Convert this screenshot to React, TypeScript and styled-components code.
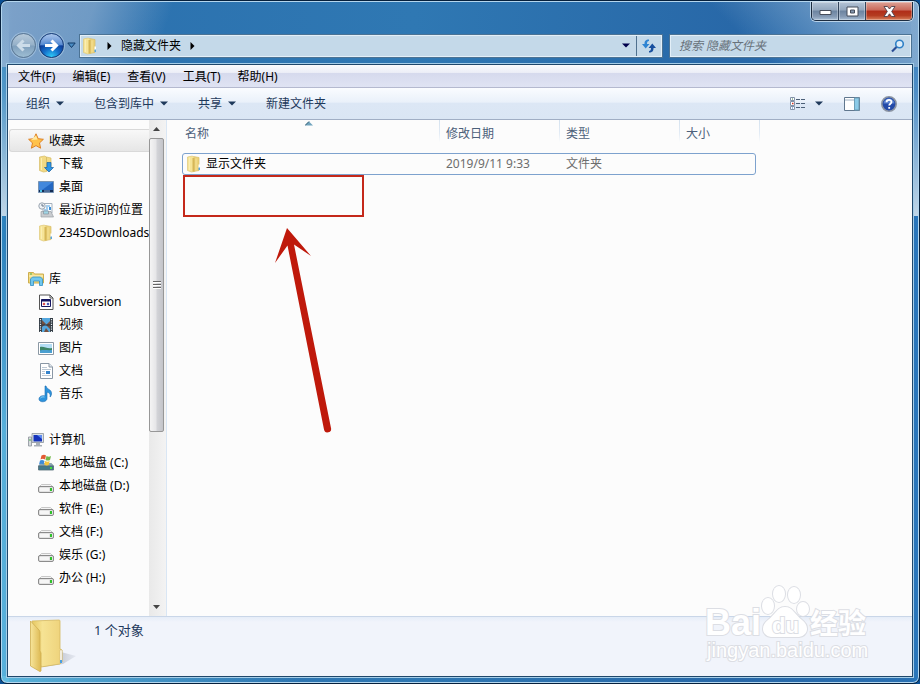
import React from "react";
import styled, { createGlobalStyle, css } from "styled-components";

const GlobalStyle = createGlobalStyle`
  * { box-sizing: border-box; }
  body { margin: 0; background: #0a4f94; }
  body, button, input { font-family: "Noto Sans", "Noto Sans CJK SC", sans-serif; font-size: 12px; line-height: 16px; }
  button { border: 0; padding: 0; margin: 0; background: none; color: inherit; }
  ul { list-style: none; margin: 0; padding: 0; }
  svg { display: block; flex: none; }
`;

const Frame = styled.div`
  min-height: 100vh;
  display: flex;
  flex-direction: column;
  padding: 0 6px 6px;
  border: 1px solid #06203c;
  border-radius: 7px;
  box-shadow: inset 0 0 0 1px #b4d6ee;
  background:
    linear-gradient(rgba(190, 214, 232, 0) 0, rgba(190, 214, 232, 0.25) 90px, rgba(200, 219, 234, 0.95) 100%) 0 0 / 8px 215px no-repeat,
    linear-gradient(rgba(190, 214, 232, 0) 0, rgba(190, 214, 232, 0.25) 90px, rgba(200, 219, 234, 0.95) 100%) 100% 0 / 8px 215px no-repeat,
    linear-gradient(108deg, rgba(146, 174, 208, 0.8) 0, rgba(140, 172, 206, 0.7) 90px, rgba(140, 172, 206, 0) 165px) 0 0 / 50% 66px no-repeat,
    linear-gradient(225deg, rgba(146, 178, 210, 0.85) 0, rgba(146, 178, 210, 0.6) 70px, rgba(140, 172, 206, 0) 150px) 100% 0 / 50% 66px no-repeat,
    linear-gradient(rgba(102, 190, 228, 0) 240px, rgba(102, 190, 228, 0.75) 430px) 0 0 / 8px 100% no-repeat,
    linear-gradient(90deg, rgba(102, 196, 228, 0.8) 0, rgba(80, 170, 220, 0) 300px) 0 100% / 100% 7px no-repeat,
    linear-gradient(90deg, #2f88c2 0, #2b70ae 12px, #2f78b3 45%, #2868a8 80%, #2a70b2 calc(100% - 12px), #2877bd 100%);
`;

const TitleBar = styled.header`
  display: flex;
  justify-content: flex-end;
  align-items: flex-start;
  height: 32px;
`;

const Caption = styled.div`
  display: flex;
  height: 19px;
  margin-top: 1px;
  border: 1px solid #1c2c40;
  border-top: 0;
  border-radius: 0 0 5px 5px;
  box-shadow: 0 0 0 1px rgba(215, 232, 245, 0.75);
  overflow: hidden;
`;

const CaptionButton = styled.button<{ $close?: boolean }>`
  display: flex;
  align-items: center;
  justify-content: center;
  width: ${(p) => (p.$close ? 46 : 27)}px;
  border-right: ${(p) => (p.$close ? 0 : 1)}px solid #33455c;
  box-shadow: inset 0 0 0 1px rgba(255, 255, 255, 0.3);
  background: ${(p) =>
    p.$close
      ? "linear-gradient(#dda296 0, #c9695a 45%, #b02c18 50%, #b43c20 75%, #d8805c 100%)"
      : "linear-gradient(#b4c4d6 0, #92a6bd 45%, #6c84a0 50%, #8499b3 80%, #a9bfd6 100%)"};
`;

const NavBar = styled.nav`
  display: flex;
  align-items: center;
  height: 31px;
  padding: 0 2px 6px 4px;
  gap: 4px;
`;

const Travel = styled.div`
  display: flex;
  align-items: center;
  gap: 3px;
`;

const RoundButton = styled.button<{ $active?: boolean }>`
  display: flex;
  align-items: center;
  justify-content: center;
  width: 25px;
  height: 25px;
  border: 1px solid ${(p) => (p.$active ? "#173c78" : "#5c7894")};
  border-radius: 50%;
  box-shadow: 0 0 0 1px rgba(190, 216, 238, 0.5);
  background: ${(p) =>
    p.$active
      ? "radial-gradient(circle at 50% 100%, #2fd0fa 0, #1672cc 32%, rgba(10, 60, 150, 0) 62%), linear-gradient(#a9c5ec 0, #5a8cd2 46%, #0c3794 52%, #0b3c9a 100%)"
      : "linear-gradient(#b7cadb 0, #95b0c8 48%, #7f9fbc 52%, #9dbdd3 100%)"};
`;

const fieldLook = css`
  display: flex;
  align-items: center;
  height: 22px;
  border: 1px solid #e3eff8;
  outline: 1px solid #4c7394;
  background: #c4d9e9;
`;

const AddressBar = styled.div`
  ${fieldLook}
  flex: 1;
  min-width: 0;
  padding-left: 1px;
`;

const Crumb = styled.button`
  padding: 0 9px;
  color: #000;
  white-space: nowrap;
`;

const DropButton = styled.button`
  display: flex;
  align-items: center;
  justify-content: center;
  width: 20px;
  height: 20px;
  margin-left: auto;
`;

const RefreshButton = styled.button`
  display: flex;
  align-items: center;
  justify-content: center;
  width: 25px;
  height: 20px;
  border-left: 1px solid #4f718f;
`;

const SearchBox = styled.label`
  ${fieldLook}
  width: 241px;
  margin-left: 4px;
  padding: 0 5px 0 8px;
`;

const SearchInput = styled.input`
  flex: 1;
  min-width: 0;
  border: 0;
  padding: 0;
  outline: 0;
  background: transparent;
  &::placeholder { color: #68727b; font-style: italic; opacity: 1; }
`;

const Client = styled.div`
  flex: 1;
  display: flex;
  flex-direction: column;
  border: 1px solid #1f476b;
  outline: 1px solid #a5cde8;
  background: #fcfcfc;
`;

const MenuBar = styled.div`
  display: flex;
  align-items: center;
  gap: 17px;
  height: 23px;
  padding: 1px 10px 0;
  border-bottom: 1px solid #b4b9cf;
  background: linear-gradient(#fafbfd 0, #eceef7 34%, #d6daed 38%, #dfe3f3 100%);
`;

const MenuItem = styled.button`
  white-space: nowrap;
  color: #000;
`;

const ToolBar = styled.div`
  display: flex;
  align-items: center;
  gap: 30px;
  height: 32px;
  padding: 0 15px 0 18px;
  border-bottom: 1px solid #a0aec4;
  background: linear-gradient(#fafcff 0, #eaf1fa 45%, #dce7f5 50%, #dae6f4 100%);
  color: #1e395b;
`;

const ToolButton = styled.button<{ $gap?: number }>`
  display: flex;
  align-items: center;
  gap: ${(p) => p.$gap ?? 6}px;
  white-space: nowrap;
`;

const ToolIcons = styled.div`
  display: flex;
  align-items: center;
  gap: 21px;
  margin-left: auto;
`;

const Body = styled.div`
  flex: 1;
  display: flex;
`;

const Sidebar = styled.aside`
  width: 141px;
  padding-top: 9px;
  overflow: hidden;
`;

const Group = styled.ul`
  margin-bottom: 23px;
`;

const TreeRow = styled.li<{ $root?: boolean; $selected?: boolean }>`
  display: flex;
  align-items: center;
  gap: 5px;
  height: 23px;
  padding-left: ${(p) => (p.$root ? 20 : 30)}px;
  white-space: nowrap;
  ${(p) =>
    p.$selected &&
    css`
      margin-left: 1px;
      padding-left: 18px;
      border: 1px solid #d9d9d9;
      border-right: 0;
      border-radius: 3px 0 0 3px;
      background: linear-gradient(#f8f8f8, #e6e6e6);
    `}
`;

const ScrollBar = styled.div`
  display: flex;
  flex-direction: column;
  align-items: stretch;
  width: 17px;
  background: linear-gradient(90deg, #e9e9e9, #f3f3f3);
`;

const ScrollArrow = styled.button`
  display: flex;
  align-items: center;
  justify-content: center;
  height: 18px;
  padding-right: 2px;
`;

const ScrollTrack = styled.div`
  flex: 1;
`;

const Thumb = styled.div`
  display: flex;
  align-items: center;
  justify-content: center;
  height: 64%;
  margin-right: 2px;
  border: 1px solid #979797;
  border-radius: 2px;
  background: linear-gradient(90deg, #f4f4f4 0, #e6e6e8 45%, #d2d3d7 55%, #c3c4c9 100%);
`;

const Main = styled.main`
  position: relative;
  flex: 1;
  min-width: 0;
  border-left: 1px solid #d9e6f4;
  padding-left: 15px;
`;

const Files = styled.table`
  width: 578px;
  table-layout: fixed;
  border-collapse: collapse;
`;

const HeadCell = styled.th<{ $width: number; $first?: boolean }>`
  position: relative;
  width: ${(p) => p.$width}px;
  height: 33px;
  padding: ${(p) => (p.$first ? "0 0 6px 3px" : "0 0 6px 6px")};
  text-align: left;
  font-weight: 400;
  color: #4c607a;
  background: linear-gradient(#d5e2ef, #e2ebf5 60%, #fcfcfc) 100% 0 / 1px 22px no-repeat;
`;

const SortMark = styled.svg`
  position: absolute;
  top: 1px;
  left: 50%;
  margin-left: -6px;
`;

const FileRow = styled.tr`
  position: relative;
  &::after {
    content: "";
    position: absolute;
    inset: 0 4px 0 0;
    border: 1px solid #7da2ce;
    border-radius: 3px;
    pointer-events: none;
  }
`;

const Cell = styled.td`
  height: 22px;
  padding: 0 0 0 6px;
  color: #6d6d6d;
  white-space: nowrap;
`;

const NameCell = styled(Cell)`
  padding-left: 4px;
  color: #000;
`;

const FileName = styled.span`
  display: flex;
  align-items: center;
  gap: 4px;
`;

const Highlight = styled.div`
  position: absolute;
  top: 55px;
  left: 16px;
  width: 181px;
  height: 42px;
  border: 2px solid #c4281a;
`;

const Pointer = styled.svg`
  position: absolute;
  top: 107px;
  left: 106px;
`;

const Details = styled.footer`
  position: relative;
  display: flex;
  height: 60px;
  padding: 1px 0 0 20px;
  gap: 16px;
  border-top: 1px solid #c9d6e8;
  background: linear-gradient(#e6edf8 0, #f1f4fb 5px);
  color: #1e395b;
`;

const Count = styled.span`
  padding-top: 4px;
  font-size: 13px;
`;

const Watermark = styled.svg`
  position: absolute;
  right: 36px;
  bottom: 12px;
  fill: #fff;
  stroke: #dcdee4;
  stroke-width: 2px;
  paint-order: stroke;
  font-family: "Liberation Sans", "Noto Sans CJK SC", sans-serif;
`;

const WatermarkText = styled.text<{ $size: number; $bold?: boolean }>`
  font-size: ${(p) => p.$size}px;
  font-weight: ${(p) => (p.$bold ? 700 : 400)};
`;

const Folder = () => (
  <svg width="16" height="18" viewBox="0 0 16 18">
    <path d="M7.500 1.500 13 2.500v13l-5.500 1z" fill="#ecd27a" stroke="#d8bd66" strokeWidth=".7" />
    <path d="M1.500 2 6.500 1l1.500 1.500v14L5.500 17l-4-1.500z" fill="#f6e498" stroke="#dfc878" strokeWidth=".7" />
    <path d="M6.500 3v13.500h2V3z" fill="#d6b757" />
    <path d="M3.500 2.500v12.500" stroke="#fbeeb2" />
    <path d="M10 3.500v12" stroke="#f5e194" />
    <path d="M12.500 9.500H14V13h-1.500z" fill="#fff" />
    <path d="M12.500 12.500H14V15h-1.500z" fill="#5aa6e0" />
  </svg>
);

const LargeFolder = () => (
  <svg width="50" height="56" viewBox="0 0 50 56">
    <defs>
      <linearGradient id="folderBack" x1="0" x2="1">
        <stop offset="0" stopColor="#e6c862" />
        <stop offset=".35" stopColor="#f6e394" />
        <stop offset="1" stopColor="#eed27a" />
      </linearGradient>
      <linearGradient id="folderFront" x1="0" x2="1">
        <stop offset="0" stopColor="#f7e59a" />
        <stop offset="1" stopColor="#ddb953" />
      </linearGradient>
      <linearGradient id="folderShade" x1="0" x2="1">
        <stop offset="0" stopColor="#8d93a1" />
        <stop offset="1" stopColor="#d8dce6" stopOpacity=".5" />
      </linearGradient>
    </defs>
    <path d="M33 34 48 38 35 46 14 49z" fill="url(#folderShade)" />
    <path d="M4 3 31 2Q32 2 32 3V31l2 1v12l-2 2-19 3z" fill="url(#folderBack)" stroke="#d6b960" strokeWidth=".8" />
    <path d="M2.500 3 11 12q1 1 1 3v18l1 2v18q-1 1-2 0l-8.500-5z" fill="url(#folderFront)" stroke="#cfae50" strokeWidth=".8" />
    <path d="M32 32h2v12l-2 1z" fill="#fff" stroke="#c9b070" strokeWidth=".5" />
    <path d="M32 42h2v3h-2z" fill="#4c9fe0" />
  </svg>
);

const Star = () => (
  <svg width="16" height="16" viewBox="0 0 16 16">
    <path d="m8 .8 2.200 4.900 5.200.6-3.900 3.600 1.100 5.300L8 12.600l-4.600 2.600 1.100-5.300L.6 6.300l5.200-.6z" fill="#ffc24a" stroke="#df8124" />
    <path d="m8 2.500 1.500 4-6.500.4z" fill="#ffe9a0" />
  </svg>
);

const Download = () => (
  <svg width="16" height="18" viewBox="0 0 16 18">
    <path d="M1.500 2 6.500 1l2 1v14.500L5.500 17l-4-1.500zM8.500 2l4.500 1v12l-4.500 1z" fill="#f2da84" stroke="#d6bb66" strokeWidth=".7" />
    <path d="M3.500 3v12" stroke="#fbeeb2" />
    <path d="M9 7.500h4v5h2.500L11 17l-4.500-4.500H9z" fill="#2f96e4" stroke="#1762a8" strokeWidth=".7" />
  </svg>
);

const Desktop = () => (
  <svg width="16" height="16" viewBox="0 0 16 16">
    <path d="M.5 2.500h15v11H.5z" fill="#2367c2" stroke="#7793b2" />
    <path d="M1 3h14L4 11H1z" fill="#4388dc" />
    <path d="M1 11h14v2H1z" fill="#142c54" />
    <path d="M2 11h2v2H2z" fill="#49c3e8" />
    <path d="M6 12h6" stroke="#85aee0" />
  </svg>
);

const Recent = () => (
  <svg width="16" height="16" viewBox="0 0 16 16">
    <path d="M5 1.500h9V11H5z" fill="#fbfdff" stroke="#a5b0bc" />
    <path d="M8 4h4M8 6h2M6 8h4" stroke="#4f9fdf" />
    <path d="M11 5h2v3h-2z" fill="#3d8fd5" />
    <path d="M3 9.500h10l2.500 5.500H3z" fill="#c9ccd0" stroke="#9a9fa5" strokeWidth=".7" />
    <path d="M5.500 9h5v3h-5z" fill="#9fd6e6" stroke="#8a949c" strokeWidth=".7" />
    <circle cx="4" cy="4" r="3.200" fill="#eef3f7" stroke="#9aa4af" />
    <path d="M4 2v2h2" stroke="#647588" fill="none" />
  </svg>
);

const Library = () => (
  <svg width="16" height="16" viewBox="0 0 16 16">
    <path d="M.5 1.500h5l1 1.500h9v9H.5z" fill="#f1da7f" stroke="#cdae4f" />
    <path d="M1 5h14" stroke="#fff5c4" />
    <path d="M2.500 14.500V8l2-2h8l2 2v6.500h-3V10h-6v4.500z" fill="#70c7ee" stroke="#318fc4" strokeWidth=".8" />
    <path d="M2 3h2" stroke="#4cb050" />
  </svg>
);

const Subversion = () => (
  <svg width="16" height="16" viewBox="0 0 16 16">
    <path d="M1.500 1h10.500l3 3v11.500H1.500z" fill="#fff" stroke="#555" />
    <path d="M12 1v3h3" fill="none" stroke="#555" />
    <path d="M3.500 5.500h9v7h-9z" fill="#fff" stroke="#141460" />
    <path d="M3.500 6.500h9" stroke="#141460" strokeWidth="2" />
    <path d="m4.500 10 1.500-1.500L7.500 10 6 11.500z" fill="#d53838" />
    <path d="m8.500 10 1.500-1.500 1.500 1.500-1.500 1.500z" fill="#3040b0" />
  </svg>
);

const Video = () => (
  <svg width="16" height="16" viewBox="0 0 16 16">
    <path d="M1 1h14v14H1z" fill="#333c44" />
    <path d="M4 1h8v14H4z" fill="#54a7de" />
    <path d="M4 3l4 4-4 3zM12 4 8 8l4 4zM6 15l2-4 3 4z" fill="#74503f" />
    <path d="M4 8h8" stroke="#26333c" />
    <path d="M2.500 2v13M13.500 2v13" stroke="#e7eef2" strokeWidth="1.200" strokeDasharray="1.200 1.200" />
  </svg>
);

const Picture = () => (
  <svg width="16" height="16" viewBox="0 0 16 16">
    <path d="M.5 2.500h15v12H.5z" fill="#fff" stroke="#8b98a4" />
    <path d="M2 4h12v9H2z" fill="#b4def5" />
    <path d="M2 7c4-1 7 2 12 1v3H2z" fill="#3c8567" />
    <path d="M2 10.500c4-1 8 0 12-.5v3H2z" fill="#4a9fd0" />
  </svg>
);

const Document = () => (
  <svg width="16" height="16" viewBox="0 0 16 16">
    <path d="M2.500.5H11L14.500 4v11.500h-12z" fill="#fff" stroke="#8a97a5" />
    <path d="M11 .5V4h3.500" fill="#e0e8ef" stroke="#8a97a5" />
    <path d="M4 4.500h5M4 6.500h9M4 8.500h3M4 10.500h3M4 12.500h9" stroke="#bcc8d4" />
    <path d="M8 8h4v3H8z" fill="#3583cc" />
  </svg>
);

const Music = () => (
  <svg width="16" height="18" viewBox="0 0 16 18">
    <path d="M8 1c1 4 6 3 5.500 8-.2 1.500-1 3-1.500 3 .8-3-.5-4-3-5v6.500C9 17.500 1 18 1 14c0-3 4-4 6-3V1z" fill="#2c93dc" stroke="#1a6cb2" strokeWidth=".6" />
    <path d="M2.500 13c1-1.200 2.500-1.300 4-1" stroke="#9bdbfa" fill="none" />
  </svg>
);

const Computer = () => (
  <svg width="16" height="16" viewBox="0 0 16 16">
    <path d="M.5 5h3v9h-3z" fill="#d7dbde" stroke="#8a9299" strokeWidth=".8" />
    <path d="M1 8h2" stroke="#49af4f" />
    <path d="M4 1.500h11.500v9H4z" fill="#dce1e6" stroke="#8b949d" strokeWidth=".8" />
    <path d="M5.500 3H14v6.500H5.500z" fill="#1533bb" />
    <path d="M9 3h5v4z" fill="#5f8cf0" />
    <path d="M8 11h4v2h2v1.500H6V13h2z" fill="#a9b0b7" />
  </svg>
);

const SystemDrive = () => (
  <svg width="16" height="18" viewBox="0 0 16 18">
    <path d="M3 9.500h10.500l2 2.500H.5z" fill="#8aa9b8" stroke="#7d929c" strokeWidth=".7" />
    <path d="M.5 12h15v4h-15z" fill="#42798a" stroke="#546c76" strokeWidth=".8" />
    <path d="M12 13h2v2h-2z" fill="#45e03c" />
    <path d="M3.500 1.500c2-1 3-1 4.500 0L7 5.500C5.500 4.500 4 4.500 2.500 5.500z" fill="#e25a32" />
    <path d="M8.500 2c2 1 3 1 4.500 0L12 6C10.500 7 9 6.500 7.500 6z" fill="#72b84a" />
    <path d="M2 6.500C4 5.500 5 6 6.500 7l-1 3.500C4 9.500 3 9.500 1 10.500z" fill="#3c8ad8" />
    <path d="M7.200 7c1.500 1 3 1 4.500 0l-1 4c-1.500.8-3 .5-4.500-.5z" fill="#f5c53d" />
  </svg>
);

const Drive = () => (
  <svg width="16" height="16" viewBox="0 0 16 16">
    <path d="M3.500 6.500h9l3 3H.5z" fill="#f4f4f4" stroke="#bbb" strokeWidth=".8" />
    <rect x=".5" y="8.500" width="15" height="6" rx="1.500" fill="#e2e2e2" stroke="#808080" strokeWidth=".9" />
    <path d="M2 10h9v3H2z" fill="#f6f6f6" />
    <path d="M12 10h2v3h-2z" fill="#30c22b" />
  </svg>
);

const Triangle = ({ color = "#1e395b" }: { color?: string }) => (
  <svg width="8" height="5" viewBox="0 0 8 5">
    <path d="M0 .5h8L4 4.500z" fill={color} />
  </svg>
);

const CrumbArrow = () => (
  <svg width="5" height="8" viewBox="0 0 5 8">
    <path d="M.5 0v8L4.500 4z" fill="#000" />
  </svg>
);

const TravelArrow = ({ back }: { back?: boolean }) => (
  <svg width="17" height="15" viewBox="0 0 17 15">
    <path
      d={back ? "M15 7.500H4M8.500 2.500l-5 5 5 5" : "M2 7.500h11M8.500 2.500l5 5-5 5"}
      fill="none"
      stroke={back ? "#ccdce9" : "#fff"}
      strokeWidth="3"
    />
  </svg>
);

type Entry = [string, React.ReactNode];

const groups: { root: Entry; items: Entry[]; selected?: boolean }[] = [
  {
    root: ["收藏夹", <Star />],
    selected: true,
    items: [
      ["下载", <Download />],
      ["桌面", <Desktop />],
      ["最近访问的位置", <Recent />],
      ["2345Downloads", <Folder />],
    ],
  },
  {
    root: ["库", <Library />],
    items: [
      ["Subversion", <Subversion />],
      ["视频", <Video />],
      ["图片", <Picture />],
      ["文档", <Document />],
      ["音乐", <Music />],
    ],
  },
  {
    root: ["计算机", <Computer />],
    items: [
      ["本地磁盘 (C:)", <SystemDrive />],
      ["本地磁盘 (D:)", <Drive />],
      ["软件 (E:)", <Drive />],
      ["文档 (F:)", <Drive />],
      ["娱乐 (G:)", <Drive />],
      ["办公 (H:)", <Drive />],
    ],
  },
];

const menus = ["文件(F)", "编辑(E)", "查看(V)", "工具(T)", "帮助(H)"];

export default function App() {
  return (
    <>
      <GlobalStyle />
      <Frame>
        <TitleBar>
          <Caption>
            <CaptionButton aria-label="最小化">
              <svg width="13" height="8" viewBox="0 0 13 8">
                <path d="M1 3.500h11v4H1z" fill="#fff" stroke="#454c5a" />
              </svg>
            </CaptionButton>
            <CaptionButton aria-label="最大化">
              <svg width="13" height="11" viewBox="0 0 13 11">
                <path d="M1 1h11v9H1z" fill="#fff" stroke="#454c5a" />
                <path d="M4.500 4h4v3h-4z" fill="#8295ad" stroke="#454c5a" />
              </svg>
            </CaptionButton>
            <CaptionButton $close aria-label="关闭">
              <svg width="13" height="11" viewBox="0 0 13 11">
                <path d="M1 .5h3.500l2 2.500 2-2.500H12L8.700 5.500l3.300 5H8.500l-2-2.700-2 2.700H1l3.300-5z" fill="#fff" stroke="#4d3f4a" strokeWidth=".9" />
              </svg>
            </CaptionButton>
          </Caption>
        </TitleBar>

        <NavBar aria-label="导航">
          <Travel>
            <RoundButton aria-label="后退"><TravelArrow back /></RoundButton>
            <RoundButton $active aria-label="前进"><TravelArrow /></RoundButton>
            <button aria-label="最近浏览">
              <svg width="9" height="7" viewBox="0 0 9 7">
                <path d="M.8 1h7.400L4.500 5.500z" fill="#4b8dc4" stroke="#123a66" />
              </svg>
            </button>
          </Travel>
          <AddressBar>
            <Folder />
            <Crumb aria-label="展开"><CrumbArrow /></Crumb>
            <button>隐藏文件夹</button>
            <Crumb aria-label="子文件夹"><CrumbArrow /></Crumb>
            <DropButton aria-label="历史地址"><Triangle color="#00004c" /></DropButton>
            <RefreshButton aria-label="刷新">
              <svg width="16" height="16" viewBox="0 0 16 16">
                <path d="M8 1.500C4.500 1.500 3.500 3 3.500 6H1l3.700 4.500L8.500 6H6c0-2 .5-3 2-3z" fill="#2f84d2" />
                <path d="M8 14.500c3.500 0 4.500-1.500 4.500-4.500H15l-3.700-4.500L7.500 10H10c0 2-.5 3-2 3z" fill="#184f9e" />
              </svg>
            </RefreshButton>
          </AddressBar>
          <SearchBox>
            <SearchInput aria-label="搜索" placeholder="搜索 隐藏文件夹" />
            <svg width="14" height="14" viewBox="0 0 14 14">
              <circle cx="8.500" cy="5" r="3.800" fill="#dcecf8" stroke="#2e80c6" strokeWidth="1.600" />
              <path d="M5.500 8 1 12.500" stroke="#2a4d94" strokeWidth="2.200" />
            </svg>
          </SearchBox>
        </NavBar>

        <Client>
          <MenuBar>
            {menus.map((m) => <MenuItem key={m}>{m}</MenuItem>)}
          </MenuBar>
          <ToolBar>
            <ToolButton>组织 <Triangle /></ToolButton>
            <ToolButton>包含到库中 <Triangle /></ToolButton>
            <ToolButton>共享 <Triangle /></ToolButton>
            <ToolButton>新建文件夹</ToolButton>
            <ToolIcons>
              <ToolButton $gap={9} aria-label="更改视图">
                <svg width="16" height="13" viewBox="0 0 16 13">
                  <path d="M.5.500h4v3h-4zM.5 4.500h4v4h-4zM.5 9.500h4v3h-4z" fill="#fff" stroke="#8292a8" />
                  <path d="M2 2h1" stroke="#3c7f4c" />
                  <path d="M2 6.500h1.500" stroke="#d53420" strokeWidth="1.500" />
                  <path d="M2 11h1" stroke="#2f6cc4" />
                  <path d="M6 2.500h10M6 6.500h10M6 10.500h10" stroke="#4c6078" strokeDasharray="4 1" />
                </svg>
                <Triangle />
              </ToolButton>
              <ToolButton aria-label="预览窗格">
                <svg width="16" height="14" viewBox="0 0 16 14">
                  <path d="M.5.500h15v13H.5z" fill="#fff" stroke="#60778e" />
                  <path d="M1 3h14" stroke="#9eb0c2" />
                  <path d="M10.500 1H15v12h-4.500z" fill="#8ccbe8" stroke="#6d9fb8" />
                </svg>
              </ToolButton>
              <ToolButton aria-label="帮助">
                <svg width="16" height="16" viewBox="0 0 16 16">
                  <circle cx="8" cy="8" r="7.200" fill="#234aa8" stroke="#8c95a3" strokeWidth="1.600" />
                  <path d="M2.500 7.500a5.500 5 0 0 1 11 0z" fill="#5a82d0" />
                  <path d="M5.500 6.300C5.600 3.200 10.600 3.300 10.500 6c0 1.700-2.300 1.800-2.300 3.600M8.200 11v1.800" fill="none" stroke="#fff" strokeWidth="1.800" />
                </svg>
              </ToolButton>
            </ToolIcons>
          </ToolBar>

          <Body>
            <Sidebar>
              {groups.map((g) => (
                <Group key={g.root[0]}>
                  <TreeRow $root $selected={g.selected}>{g.root[1]}{g.root[0]}</TreeRow>
                  {g.items.map(([name, icon]) => (
                    <TreeRow key={name}>{icon}{name}</TreeRow>
                  ))}
                </Group>
              ))}
            </Sidebar>
            <ScrollBar>
              <ScrollArrow aria-label="向上滚动">
                <svg width="7" height="4" viewBox="0 0 7 4"><path d="M0 4 3.500 0 7 4z" fill="#444" /></svg>
              </ScrollArrow>
              <ScrollTrack>
                <Thumb>
                  <svg width="8" height="9" viewBox="0 0 8 9">
                    <path d="M0 .5h8M0 3.500h8M0 6.500h8" stroke="#666" />
                    <path d="M0 1.500h8M0 4.500h8M0 7.500h8" stroke="#fff" />
                  </svg>
                </Thumb>
              </ScrollTrack>
              <ScrollArrow aria-label="向下滚动">
                <svg width="7" height="4" viewBox="0 0 7 4"><path d="M0 0h7L3.500 4z" fill="#444" /></svg>
              </ScrollArrow>
            </ScrollBar>
            <Main>
              <Files>
                <thead>
                  <tr>
                    <HeadCell $width={258} $first>
                      名称
                      <SortMark width="8" height="5" viewBox="0 0 8 5">
                        <path d="M0 4.500 4 .5l4 4z" fill="#6fa3bd" />
                        <path d="M0 4.500 4 .5" stroke="#28566e" />
                      </SortMark>
                    </HeadCell>
                    <HeadCell $width={120}>修改日期</HeadCell>
                    <HeadCell $width={120}>类型</HeadCell>
                    <HeadCell $width={80}>大小</HeadCell>
                  </tr>
                </thead>
                <tbody>
                  <FileRow>
                    <NameCell><FileName><Folder />显示文件夹</FileName></NameCell>
                    <Cell>2019/9/11 9:33</Cell>
                    <Cell>文件夹</Cell>
                    <Cell />
                  </FileRow>
                </tbody>
              </Files>
              <Highlight />
              <Pointer width="62" height="208" viewBox="0 0 62 208">
                <path d="M14 1 38 29 21 17.500 58 201a3.500 3.500 0 0 1-7 1.500L14.500 18.500 2 36z" fill="#bf190b" />
              </Pointer>
            </Main>
          </Body>

          <Details>
            <LargeFolder />
            <Count>1 个对象</Count>
            <Watermark width="172" height="82" viewBox="0 0 172 82">
              <WatermarkText x="1" y="53" $size={36} $bold>Bai</WatermarkText>
              <ellipse cx="64" cy="24" rx="6" ry="8" />
              <ellipse cx="75" cy="12" rx="6" ry="8" />
              <ellipse cx="90" cy="13" rx="6" ry="8" />
              <ellipse cx="99" cy="27" rx="6" ry="7" />
              <path d="M81 25c8 0 10 8 17 13 8 6 6 16-3 17H67c-9-1-11-11-3-17 7-5 9-13 17-13z" />
              <WatermarkText x="68" y="51" $size={22} $bold>du</WatermarkText>
              <WatermarkText x="106" y="52" $size={28} $bold>经验</WatermarkText>
              <WatermarkText x="3" y="75" $size={20}>jingyan.baidu.com</WatermarkText>
            </Watermark>
          </Details>
        </Client>
      </Frame>
    </>
  );
}
